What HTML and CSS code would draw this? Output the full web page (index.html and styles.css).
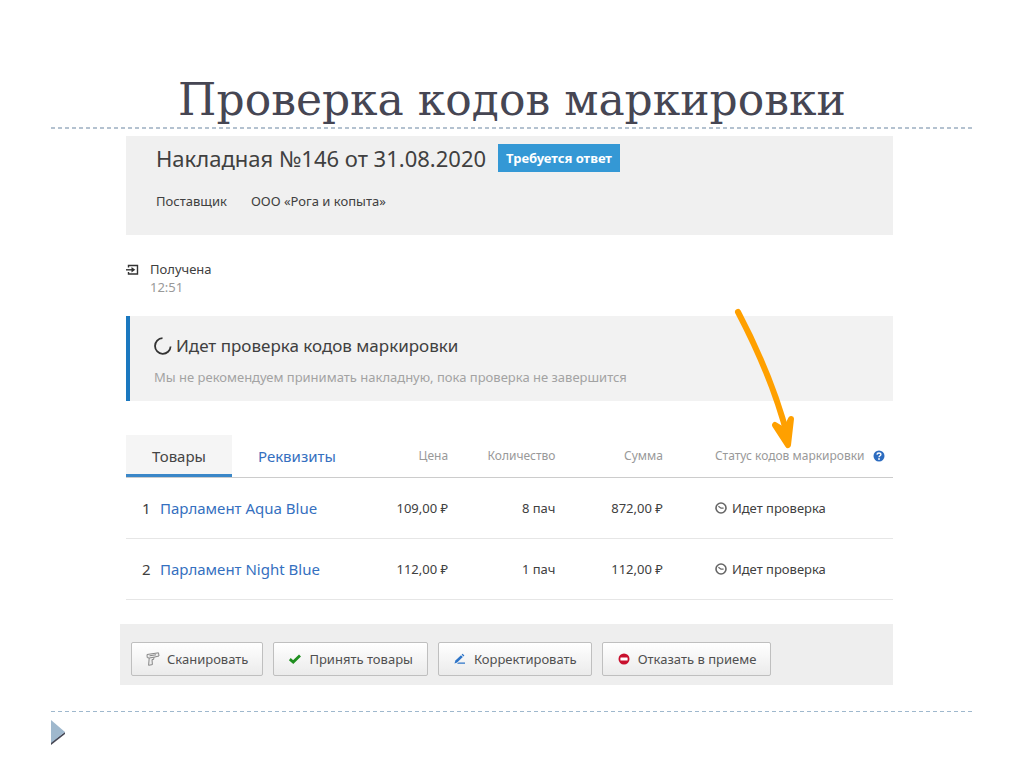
FILE: index.html
```
<!DOCTYPE html>
<html lang="ru">
<head>
    <meta charset="UTF-8">
    <meta name="viewport" content="width=device-width, initial-scale=1.0">
    <title>Проверка кодов маркировки</title>
    <link rel="stylesheet" href="styles.css">
</head>
<body>
    <div class="slide">
        <h1 class="slide-title">Проверка кодов маркировки</h1>

        <main class="content">
            <header class="invoice">
                <div class="invoice-head">
                    <h2>Накладная №146 от 31.08.2020</h2>
                    <span class="badge">Требуется ответ</span>
                </div>
                <div class="supplier">
                    <span>Поставщик</span>
                    <span>ООО «Рога и копыта»</span>
                </div>
            </header>

            <div class="received">
                <svg width="14" height="12" viewBox="0 0 14 12" fill="none" stroke="#333">
                    <path d="M2.5 3.5V1.5H11.5V10H2.5V8" stroke-width="1.4"/>
                    <path d="M0 5.8H7" stroke-width="1.4"/>
                    <path d="M5.5 3L9.3 5.8L5.5 8.6Z" fill="#333" stroke="none"/>
                </svg>
                <div>
                    <div>Получена</div>
                    <div class="time">12:51</div>
                </div>
            </div>

            <section class="notice">
                <h3>
                    <svg width="18" height="18" viewBox="0 0 18 18" fill="none" stroke="#333" stroke-width="1.8">
                        <path d="M8.5 1.2A7.8 7.8 0 1 0 16.6 9.5"/>
                    </svg>
                    Идет проверка кодов маркировки
                </h3>
                <p>Мы не рекомендуем принимать накладную, пока проверка не завершится</p>
                <svg class="arrow" width="62" height="142" viewBox="0 0 62 142" fill="none" stroke="#ffa000" stroke-width="6" stroke-linecap="round" stroke-linejoin="round">
                    <path d="M4 5C25 45 42 84 54 131"/>
                    <path d="M41 118L54 138L57 112L51 124Z" fill="#ffa000"/>
                </svg>
            </section>

            <table class="goods">
                <thead>
                    <tr>
                        <th class="col-name">
                            <div class="tabs">
                                <button type="button" class="tab active">Товары</button>
                                <button type="button" class="tab">Реквизиты</button>
                            </div>
                        </th>
                        <th class="col-price">Цена</th>
                        <th class="col-num">Количество</th>
                        <th class="col-num">Сумма</th>
                        <th class="col-status">
                            <div class="status">
                                Статус кодов маркировки
                                <svg class="help" width="12" height="12" viewBox="0 0 12 12" fill="none">
                                    <circle cx="6" cy="6" r="5.5" fill="#2d6cc0"/>
                                    <path d="M4 4.6C4.1 2.4 8 2.5 7.9 4.6C7.9 5.8 6 5.8 6 7.2" stroke="#fff" stroke-width="1.4"/>
                                    <circle cx="6" cy="9" r="0.9" fill="#fff"/>
                                </svg>
                            </div>
                        </th>
                    </tr>
                </thead>
                <tbody>
                    <tr>
                        <td class="col-name"><span class="num">1</span><a href="#">Парламент Aqua Blue</a></td>
                        <td>109,00 ₽</td>
                        <td>8 пач</td>
                        <td>872,00 ₽</td>
                        <td class="col-status">
                            <div class="status">
                                <svg width="12" height="12" viewBox="0 0 12 12" fill="none" stroke="#666">
                                    <circle cx="6" cy="6" r="5" stroke-width="1.6"/>
                                    <path d="M3.4 4.2L6 6.2H8.6" stroke-width="1.2"/>
                                </svg>
                                Идет проверка
                            </div>
                        </td>
                    </tr>
                    <tr>
                        <td class="col-name"><span class="num">2</span><a href="#">Парламент Night Blue</a></td>
                        <td>112,00 ₽</td>
                        <td>1 пач</td>
                        <td>112,00 ₽</td>
                        <td class="col-status">
                            <div class="status">
                                <svg width="12" height="12" viewBox="0 0 12 12" fill="none" stroke="#666">
                                    <circle cx="6" cy="6" r="5" stroke-width="1.6"/>
                                    <path d="M3.4 4.2L6 6.2H8.6" stroke-width="1.2"/>
                                </svg>
                                Идет проверка
                            </div>
                        </td>
                    </tr>
                </tbody>
            </table>

            <div class="actions">
                <button type="button" class="btn">
                    <svg width="14" height="14" viewBox="0 0 14 14" fill="#eee" stroke="#888" stroke-linejoin="round">
                        <path d="M1 2.5L12.5 0.8L13 4L8 5.2L7.6 7.5L6 7.6L6.4 12.6L2.6 13.3L3.2 6L1.2 5.6Z"/>
                        <path d="M3.2 6L8 5.2M3.5 3.8L10 2.8"/>
                    </svg>
                    Сканировать
                </button>
                <button type="button" class="btn">
                    <svg width="14" height="14" viewBox="0 0 14 14" fill="none" stroke="#1f8f1f" stroke-width="2.8">
                        <path d="M1.8 7.2L5.2 10L12 3.4"/>
                    </svg>
                    Принять товары
                </button>
                <button type="button" class="btn">
                    <svg width="14" height="14" viewBox="0 0 14 14" fill="#2d74c8">
                        <path d="M1.5 11.5L2.4 8.6L8 3.2L9.8 5L4.2 10.6Z"/>
                        <path d="M8.6 2.6L9.6 1.8L11.4 3.4L10.4 4.4Z"/>
                        <path d="M5.5 10.4H12V11.8H4Z"/>
                    </svg>
                    Корректировать
                </button>
                <button type="button" class="btn">
                    <svg width="14" height="14" viewBox="0 0 14 14">
                        <circle cx="7" cy="7" r="5.5" fill="#c8102e"/>
                        <rect x="3.4" y="5.4" width="7.2" height="3.2" rx="0.5" fill="#fff"/>
                    </svg>
                    Отказать в приеме
                </button>
            </div>
        </main>

        <footer class="slide-footer">
            <svg width="15" height="26" viewBox="0 0 15 26">
                <path d="M0 25L14 14V12L0 22Z" fill="#464653"/>
                <path d="M0 0L14 12L0 23Z" fill="#9fb8cd"/>
            </svg>
        </footer>
    </div>
</body>
</html>
```
FILE: styles.css
```
* {
    box-sizing: border-box;
}

body {
    margin: 0;
    background: #fff;
    color: #404040;
    font-family: "Noto Sans", "Open Sans", sans-serif;
    font-size: 13px;
    line-height: 18px;
}

h1, h2, h3, p {
    margin: 0;
    font-weight: normal;
}

.slide {
    padding: 74px 51px 0;
}

.slide-title {
    padding-bottom: 3px;
    text-align: center;
    color: #464653;
    font-family: "DejaVu Serif", serif;
    font-size: 44px;
    line-height: 52px;
    background: repeating-linear-gradient(90deg, #b4c2d0 0 4px, transparent 4px 7px) left bottom / 100% 2px no-repeat;
}

.content {
    margin: 7px 80px 0 75px;
}

.invoice {
    height: 99px;
    padding: 8px 30px;
    background: #f0f0f0;
}

.invoice-head {
    display: flex;
    align-items: center;
    gap: 12px;
}

.invoice-head h2 {
    font-size: 22px;
    line-height: 28px;
}

.badge {
    padding: 5px 8px;
    background: #3498d5;
    color: #fff;
    font-weight: bold;
}

.supplier {
    display: flex;
    gap: 24px;
    margin-top: 20px;
}

.received {
    display: flex;
    align-items: flex-start;
    gap: 10px;
    padding: 25px 0 20px;
}

.received svg {
    margin-top: 4px;
}

.time {
    color: #999;
}

.notice {
    position: relative;
    padding: 18px 24px 15px;
    border-left: 4px solid #1b78bf;
    background: #f2f2f2;
}

.notice h3 {
    display: flex;
    align-items: center;
    gap: 4px;
    font-size: 17px;
    line-height: 24px;
}

.notice p {
    margin-top: 10px;
    color: #a3a3a3;
}

.arrow {
    position: absolute;
    top: -9px;
    right: 97px;
}

.goods {
    width: 100%;
    margin-top: 34px;
    border-collapse: collapse;
    table-layout: fixed;
}

.goods th, .goods td {
    height: 61px;
    padding: 0;
    border-bottom: 1px solid #e6e6e6;
    text-align: right;
}

.goods th {
    height: 42px;
    color: #999;
    font-size: 12px;
    font-weight: normal;
    border-bottom-color: #ccc;
}

.goods .col-name {
    width: 32%;
    text-align: left;
    font-size: 15px;
}

.col-price {
    width: 10%;
}

.col-num {
    width: 14%;
}

.goods .col-status {
    width: 30%;
    padding-left: 52px;
    text-align: left;
}

.num {
    display: inline-block;
    width: 34px;
    padding-left: 16px;
}

a {
    color: #3570c0;
    text-decoration: none;
}

.status {
    display: flex;
    align-items: center;
    gap: 5px;
    white-space: nowrap;
}

.help {
    margin-left: 3px;
}

.tabs {
    display: flex;
}

.tab {
    height: 42px;
    padding: 3px 26px 0;
    border: none;
    border-bottom: 3px solid transparent;
    background: none;
    color: #3570c0;
    font: inherit;
    cursor: pointer;
}

.tab.active {
    border-bottom-color: #3a87c8;
    background: #f5f5f5;
    color: #444;
}

.actions {
    display: flex;
    gap: 10px;
    margin: 24px 0 0 -6px;
    padding: 18px 11px 9px;
    background: #eee;
}

.btn {
    display: flex;
    align-items: center;
    gap: 7px;
    height: 34px;
    padding: 0 14px;
    border: 1px solid #bfbfbf;
    border-radius: 2px;
    background: linear-gradient(#fff, #ebebeb);
    color: #505050;
    font: inherit;
    white-space: nowrap;
    cursor: pointer;
}

.slide-footer {
    margin-top: 26px;
    padding-top: 9px;
    background: repeating-linear-gradient(90deg, #9fb8cd 0 4px, transparent 4px 7px) left top / 100% 1px no-repeat;
}

.slide-footer svg {
    display: block;
}
```
